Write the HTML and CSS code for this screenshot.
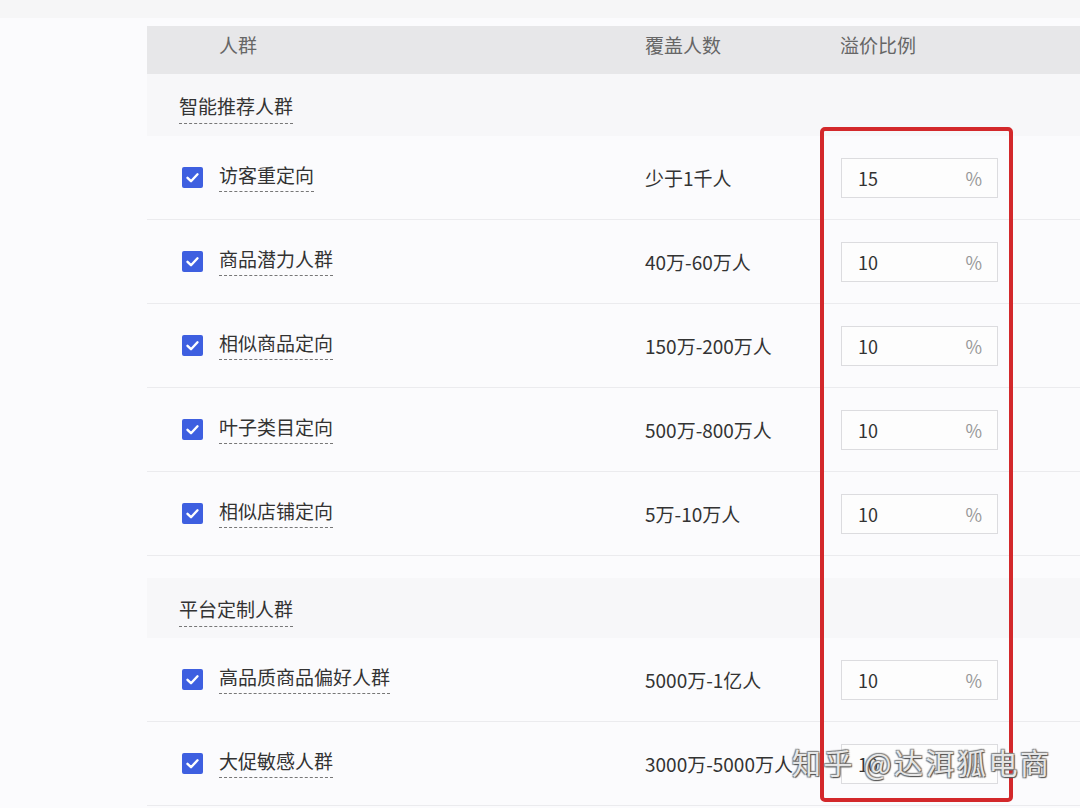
FILE: index.html
```html
<!DOCTYPE html>
<html lang="zh-CN">
<head>
<meta charset="utf-8">
<title>人群溢价</title>
<link rel="stylesheet" href="styles.css">
</head>
<body>
<div class="topstrip"></div>
<div class="page">
  <div class="table">
    <div class="thead">
      <div class="th th-name">人群</div>
      <div class="th">覆盖人数</div>
      <div class="th">溢价比例</div>
    </div>

    <div class="group">
      <div class="group-title"><span class="dashed">智能推荐人群</span></div>
    </div>
    <div class="row">
      <div class="cell-name"><span class="check"><svg viewBox="0 0 21 21" width="21" height="21"><path d="M5.5 10.8 L9 14.2 L15.5 7.3" fill="none" stroke="#fff" stroke-width="2.4" stroke-linecap="round" stroke-linejoin="round"/></svg></span><span class="dashed">访客重定向</span></div>
      <div class="cell-count">少于1千人</div>
      <div class="cell-rate"><div class="input"><span class="val">15</span><span class="pct">%</span></div></div>
    </div>
    <div class="row">
      <div class="cell-name"><span class="check"><svg viewBox="0 0 21 21" width="21" height="21"><path d="M5.5 10.8 L9 14.2 L15.5 7.3" fill="none" stroke="#fff" stroke-width="2.4" stroke-linecap="round" stroke-linejoin="round"/></svg></span><span class="dashed">商品潜力人群</span></div>
      <div class="cell-count">40万-60万人</div>
      <div class="cell-rate"><div class="input"><span class="val">10</span><span class="pct">%</span></div></div>
    </div>
    <div class="row">
      <div class="cell-name"><span class="check"><svg viewBox="0 0 21 21" width="21" height="21"><path d="M5.5 10.8 L9 14.2 L15.5 7.3" fill="none" stroke="#fff" stroke-width="2.4" stroke-linecap="round" stroke-linejoin="round"/></svg></span><span class="dashed">相似商品定向</span></div>
      <div class="cell-count">150万-200万人</div>
      <div class="cell-rate"><div class="input"><span class="val">10</span><span class="pct">%</span></div></div>
    </div>
    <div class="row">
      <div class="cell-name"><span class="check"><svg viewBox="0 0 21 21" width="21" height="21"><path d="M5.5 10.8 L9 14.2 L15.5 7.3" fill="none" stroke="#fff" stroke-width="2.4" stroke-linecap="round" stroke-linejoin="round"/></svg></span><span class="dashed">叶子类目定向</span></div>
      <div class="cell-count">500万-800万人</div>
      <div class="cell-rate"><div class="input"><span class="val">10</span><span class="pct">%</span></div></div>
    </div>
    <div class="row">
      <div class="cell-name"><span class="check"><svg viewBox="0 0 21 21" width="21" height="21"><path d="M5.5 10.8 L9 14.2 L15.5 7.3" fill="none" stroke="#fff" stroke-width="2.4" stroke-linecap="round" stroke-linejoin="round"/></svg></span><span class="dashed">相似店铺定向</span></div>
      <div class="cell-count">5万-10万人</div>
      <div class="cell-rate"><div class="input"><span class="val">10</span><span class="pct">%</span></div></div>
    </div>

    <div class="group group-2">
      <div class="group-title"><span class="dashed">平台定制人群</span></div>
    </div>
    <div class="row">
      <div class="cell-name"><span class="check"><svg viewBox="0 0 21 21" width="21" height="21"><path d="M5.5 10.8 L9 14.2 L15.5 7.3" fill="none" stroke="#fff" stroke-width="2.4" stroke-linecap="round" stroke-linejoin="round"/></svg></span><span class="dashed">高品质商品偏好人群</span></div>
      <div class="cell-count">5000万-1亿人</div>
      <div class="cell-rate"><div class="input"><span class="val">10</span><span class="pct">%</span></div></div>
    </div>
    <div class="row">
      <div class="cell-name"><span class="check"><svg viewBox="0 0 21 21" width="21" height="21"><path d="M5.5 10.8 L9 14.2 L15.5 7.3" fill="none" stroke="#fff" stroke-width="2.4" stroke-linecap="round" stroke-linejoin="round"/></svg></span><span class="dashed">大促敏感人群</span></div>
      <div class="cell-count">3000万-5000万人</div>
      <div class="cell-rate"><div class="input"><span class="val">10</span><span class="pct">%</span></div></div>
    </div>
  </div>
</div>
<div class="highlight"></div>
<div class="watermark">知乎 @达洱狐电商</div>
</body>
</html>
```
FILE: styles.css
```css
html, body {
  margin: 0;
  padding: 0;
}
body {
  background: #fbfbfd;
  font-family: "Noto Sans CJK SC", "Noto Sans", sans-serif;
  color: #333;
  width: 1080px;
  height: 808px;
  overflow: hidden;
  position: relative;
}
.topstrip {
  height: 18px;
  background: #f6f6f7;
}
.page {
  padding: 8px 0 0 147px;
}
.table {
  width: 933px;
}
.thead {
  display: grid;
  grid-template-columns: 498px 195px 1fr;
  height: 48px;
  background: #e7e7e9;
  align-items: start;
}
.th {
  font-size: 19px;
  line-height: 24px;
  padding-top: 7px;
  color: #666;
}
.th-name {
  padding-left: 72px;
}
.group {
  height: 62px;
  background: #f7f7f9;
  display: flex;
  align-items: center;
  padding-left: 32px;
}
.group-2 {
  margin-top: 22px;
  height: 60px;
}
.group-title {
  font-size: 19px;
  line-height: 24px;
  color: #333;
  padding-top: 2px;
}
.dashed {
  border-bottom: 1px dashed #777;
  padding-bottom: 4px;
}
.row {
  display: grid;
  grid-template-columns: 498px 195px 1fr;
  height: 83px;
  align-items: center;
  border-bottom: 1px solid #ebebee;
  font-size: 19px;
  line-height: 24px;
}
.cell-name {
  display: flex;
  align-items: center;
  padding-left: 35px;
}
.check {
  width: 21px;
  height: 21px;
  background: #3e5fe0;
  border-radius: 2px;
  margin-right: 16px;
  display: flex;
}
.cell-count {
  color: #333;
}
.cell-rate {
  padding-left: 1px;
}
.input {
  width: 124px;
  height: 38px;
  border: 1px solid #dcdcdf;
  background: #fdfdfd;
  display: flex;
  align-items: center;
  justify-content: space-between;
  padding: 0 15px 0 16px;
}
.val {
  font-size: 18px;
  color: #333;
}
.pct {
  font-size: 18px;
  color: #999;
}
.highlight {
  position: absolute;
  left: 820px;
  top: 127px;
  width: 185px;
  height: 667px;
  border: 4px solid #d3282b;
  border-radius: 5px;
}
.watermark {
  position: absolute;
  left: 792px;
  top: 742px;
  font-size: 29px;
  line-height: 40px;
  letter-spacing: 2.5px;
  color: rgba(248, 248, 248, 0.9);
  text-shadow: 1px 1px 1px #555, -1px -1px 1px #888, 1px -1px 1px #888, -1px 1px 1px #888;
  white-space: nowrap;
}
```
